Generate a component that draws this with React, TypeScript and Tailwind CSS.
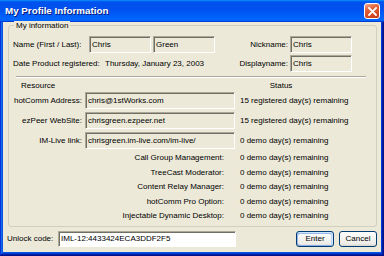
const readonlyBox =
  "h-[17px] flex items-center pl-[2px] bg-[#ece9d8] border border-[#aca899] border-r-white border-b-white shadow-[inset_1px_1px_0_#716f64] whitespace-nowrap overflow-hidden";

const resources = [
  { label: "hotComm Address:", value: "chris@1stWorks.com", status: "15 registered day(s) remaining" },
  { label: "ezPeer WebSite:", value: "chrisgreen.ezpeer.net", status: "15 registered day(s) remaining" },
  { label: "IM-Live link:", value: "chrisgreen.im-live.com/im-live/", status: "0 demo day(s) remaining" },
];

const features = [
  "Call Group Management:",
  "TreeCast Moderator:",
  "Content Relay Manager:",
  "hotComm Pro Option:",
  "Injectable Dynamic Desktop:",
];

function CloseButton() {
  return (
    <div className="w-[16px] h-[16px] rounded-[3px] border border-white bg-[linear-gradient(160deg,#f4a98e_0%,#e3623a_35%,#d84a22_70%,#c23c15_100%)] flex items-center justify-center">
      <svg width="9" height="9" viewBox="0 0 9 9">
        <path d="M1 1L8 8M8 1L1 8" stroke="white" strokeWidth="1.8" strokeLinecap="square" />
      </svg>
    </div>
  );
}

function XpButton({ label, isDefault }: { label: string; isDefault?: boolean }) {
  return (
    <div
      className={
        "w-[38px] h-[16px] flex items-center justify-center rounded-[3px] border border-[#003c74] bg-[linear-gradient(180deg,#ffffff,#ecebe6_86%,#d6d0c5)] " +
        (isDefault
          ? "shadow-[inset_-1px_1px_#cee7ff,inset_1px_2px_#98b8ea,inset_-2px_2px_#bcd4f6,inset_1px_-1px_#89ade4]"
          : "")
      }
    >
      {label}
    </div>
  );
}

export default function App() {
  return (
    <div className="w-[384px] h-[256px] flex flex-col bg-[#0855dd] shadow-[inset_-1px_-1px_#00138c,inset_1px_1px_#0831d9,inset_-2px_-2px_#001ea0,inset_2px_2px_#166aee,inset_-3px_-3px_#003bda,inset_3px_3px_#0855dd] font-['Liberation_Sans',Arial,sans-serif] text-[8px] text-black leading-[10px]">
      {/* title bar */}
      <div className="h-[22px] shrink-0 flex items-center pl-[5px] pr-[4px] bg-[linear-gradient(180deg,#0997ff,#0053ee_8%,#0050ee_40%,#0066ff_88%,#0066ff_93%,#005bff_95%,#003dd7_96%,#003dd7)]">
        <span className="flex-1 text-white font-bold text-[9.8px] [text-shadow:1px_1px_0_#0a1a7a]">
          My Profile Information
        </span>
        <CloseButton />
      </div>

      <div className="flex-1 ml-[3px] mr-[3px] mb-[4px] bg-[#ece9d8] flex flex-col pt-[3px] pl-[5px] pr-[4px]">
        <div className="relative h-[202px] shrink-0 border border-[#d0d0bf] rounded-[3px] pl-[4px] pt-[10px]">
          <span className="absolute top-[-5px] left-[5px] px-[2px] bg-[#ece9d8]">My information</span>

          <div className="flex items-center h-[17px]">
            <span className="w-[76px]">Name (First / Last):</span>
            <div className={readonlyBox + " w-[62px]"}>Chris</div>
            <div className={readonlyBox + " w-[62px] ml-[2px]"}>Green</div>
            <span className="w-[73px] text-right">Nickname:</span>
            <div className={readonlyBox + " w-[62px] ml-[2px]"}>Chris</div>
          </div>

          <div className="flex items-center h-[17px] mt-[2px]">
            <span className="w-[92px]">Date Product registered:</span>
            <span className="w-[110px]">Thursday, January 23, 2003</span>
            <span className="w-[73px] text-right">Displayname:</span>
            <div className={readonlyBox + " w-[62px] ml-[2px]"}>Chris</div>
          </div>

          <div className="ml-[3px] mt-[4px] w-[350px] border-t border-[#aca899] border-b border-b-white" />

          <div className="flex items-center h-[14px] pt-[1px]">
            <span className="ml-[8px] w-[219px]">Resource</span>
            <span className="w-[82px] text-center">Status</span>
          </div>

          <div className="flex flex-col gap-[3px]">
            {resources.map((r) => (
              <div key={r.label} className="flex items-center h-[17px]">
                <span className="w-[69px] text-right whitespace-nowrap">{r.label}</span>
                <div className={readonlyBox + " w-[150px] ml-[3px]"}>{r.value}</div>
                <span className="ml-[5px] whitespace-nowrap">{r.status}</span>
              </div>
            ))}
          </div>

          <div className="flex flex-col mt-[1.75px]">
            {features.map((f) => (
              <div key={f} className="flex items-center h-[14.5px]">
                <span className="w-[211px] text-right whitespace-nowrap">{f}</span>
                <span className="ml-[16px] whitespace-nowrap">0 demo day(s) remaining</span>
              </div>
            ))}
          </div>
        </div>

        <div className="flex items-center mt-[4px] h-[16px] pl-[-1px]">
          <span className="w-[51px] -ml-[1px]">Unlock code:</span>
          <div className="w-[178px] h-[16px] flex items-center pl-[2px] bg-white border border-[#aca899] border-r-white border-b-white shadow-[inset_1px_1px_0_#716f64] whitespace-nowrap">
            IML-12:4433424ECA3DDF2F5
          </div>
          <div className="flex-1" />
          <XpButton label="Enter" isDefault />
          <div className="w-[5px]" />
          <XpButton label="Cancel" />
        </div>
      </div>
    </div>
  );
}
